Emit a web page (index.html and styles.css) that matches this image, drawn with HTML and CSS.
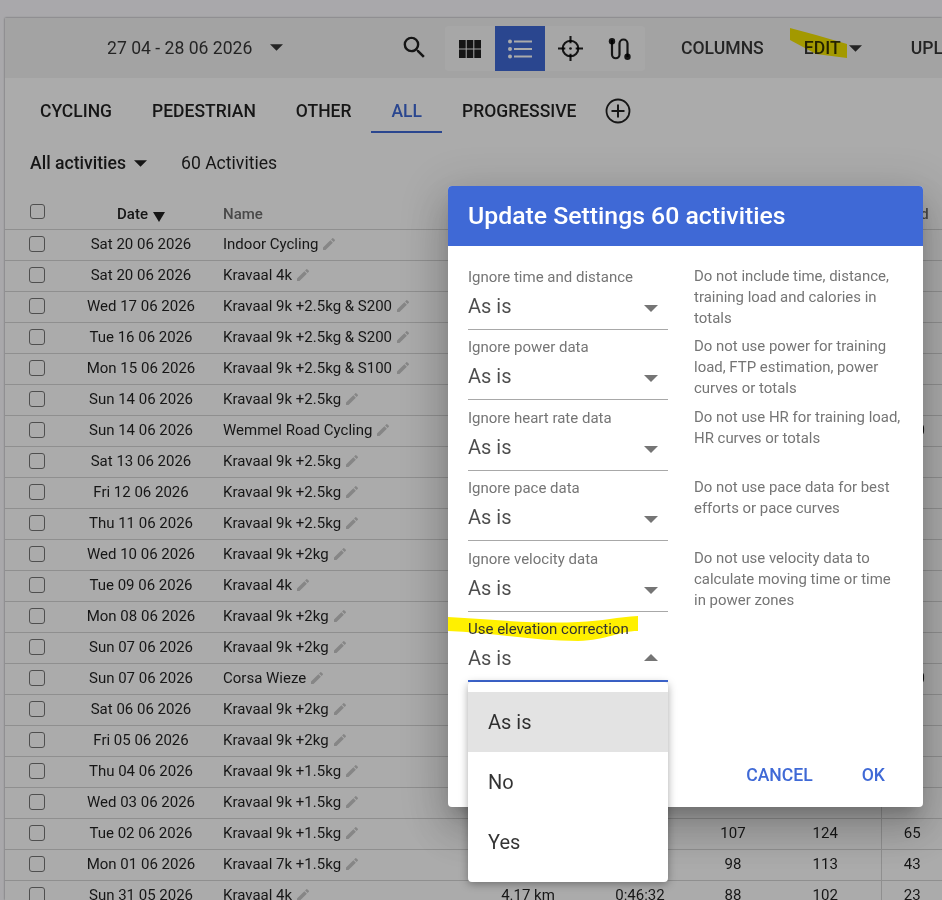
FILE: index.html
```html
<!DOCTYPE html>
<html lang="en">
<head>
<meta charset="utf-8">
<title>Activities</title>
<link rel="stylesheet" href="styles.css">
</head>
<body>
<svg class="defs" width="0" height="0"><symbol id="pen" viewBox="0 0 24 24"><path d="M3 17.250V21h3.750L17.810 9.940l-3.750-3.750L3 17.250zM20.710 7.040a1 1 0 0 0 0-1.410l-2.340-2.340a1 1 0 0 0-1.410 0l-1.830 1.830 3.750 3.750 1.830-1.830z"/></symbol></svg>
<div class="card">
  <header class="toolbar">
    <div class="range">27 04 - 28 06 2026<svg class="caret-lg" viewBox="0 0 12 6"><path d="M0 0h12L6 6z"/></svg></div>
    <svg class="search" viewBox="0 0 24 24"><path d="M15.500 14h-.79l-.28-.27A6.470 6.470 0 0 0 16 9.500 6.500 6.500 0 1 0 9.500 16c1.610 0 3.090-.59 4.230-1.570l.27.28v.79l5 4.990L20.490 19l-4.990-5zm-6 0C7.010 14 5 11.990 5 9.500S7.010 5 9.500 5 14 7.010 14 9.500 11.990 14 9.500 14z"/></svg>
    <div class="views">
      <div class="view"><svg class="ico" viewBox="0 0 24 24"><path d="M1 3h6.700v8.600H1zM8.700 3h6.600v8.600H8.700zM16.300 3H23v8.600h-6.700zM1 12.500h6.700V21H1zM8.700 12.500h6.600V21H8.700zM16.300 12.500H23V21h-6.700z"/></svg></div>
      <div class="view view-on"><svg class="ico" viewBox="0 0 24 24"><circle cx="2" cy="4.500" r="2"/><circle cx="2" cy="12" r="2"/><circle cx="2" cy="19.500" r="2"/><rect x="6" y="3.500" width="18" height="2"/><rect x="6" y="11" width="18" height="2"/><rect x="6" y="18.500" width="18" height="2"/></svg></div>
      <div class="view"><svg class="ico ico-target" viewBox="0 0 24 24"><circle cx="12" cy="12" r="7.500" fill="none" stroke="currentColor" stroke-width="2"/><circle cx="12" cy="12" r="1.300"/><path d="M11 0h2v7h-2zM11 17h2v7h-2zM0 11h7v2H0zM17 11h7v2h-7z"/></svg></div>
      <div class="view"><svg class="ico" viewBox="0 0 24 24"><path d="M4 3v14.500a3.750 3.750 0 0 0 7.500 0V6.500a4 4 0 0 1 8 0V20" fill="none" stroke="currentColor" stroke-width="2.200"/><circle cx="4" cy="4.200" r="3.200"/><circle cx="19.500" cy="19.800" r="3.200"/></svg></div>
    </div>
    <span class="tool-btn tool-columns">COLUMNS</span>
    <span class="tool-btn tool-edit">EDIT<svg class="caret-sm" viewBox="0 0 12 6"><path d="M0 0h12L6 6z"/></svg><svg class="mark mark-edit" viewBox="0 0 57 30"><path d="M0 0L26 7 57 16V30L26 26 0 12z"/></svg></span>
    <span class="tool-btn tool-upload">UPLOAD</span>
  </header>

  <nav class="tabs">
    <span class="tab">CYCLING</span>
    <span class="tab">PEDESTRIAN</span>
    <span class="tab">OTHER</span>
    <span class="tab tab-on">ALL</span>
    <span class="tab">PROGRESSIVE</span>
    <svg class="add" viewBox="0 0 26 26"><circle cx="13" cy="13" r="11.500" fill="none" stroke="currentColor" stroke-width="1.800"/><path d="M12 6.500h2V12h5.500v2H14v5.500h-2V14H6.500v-2H12z"/></svg>
  </nav>

  <div class="filter">
    <span class="filter-name">All activities<svg class="caret-sm" viewBox="0 0 12 6"><path d="M0 0h12L6 6z"/></svg></span>
    <span class="count">60 Activities</span>
  </div>

  <table class="grid">
    <thead>
      <tr>
        <th class="c-check"><span class="box box-head"></span></th>
        <th class="c-date">Date<svg class="sort" viewBox="0 0 12 10"><path d="M0 0h12L6 10z"/></svg></th>
        <th class="c-name">Name</th>
        <th class="c-dist"></th><th class="c-time"></th><th class="c-avg"></th><th class="c-max"></th>
        <th class="c-last">Load</th>
      </tr>
    </thead>
    <tbody>
      <tr><td><span class="box"></span></td><td>Sat 20 06 2026</td><td class="c-name">Indoor Cycling<svg class="pen"><use href="#pen"/></svg></td><td></td><td></td><td></td><td></td><td class="c-last"></td></tr>
      <tr><td><span class="box"></span></td><td>Sat 20 06 2026</td><td class="c-name">Kravaal 4k<svg class="pen"><use href="#pen"/></svg></td><td></td><td></td><td></td><td></td><td class="c-last"></td></tr>
      <tr><td><span class="box"></span></td><td>Wed 17 06 2026</td><td class="c-name">Kravaal 9k +2.5kg &amp; S200<svg class="pen"><use href="#pen"/></svg></td><td></td><td></td><td></td><td></td><td class="c-last"></td></tr>
      <tr><td><span class="box"></span></td><td>Tue 16 06 2026</td><td class="c-name">Kravaal 9k +2.5kg &amp; S200<svg class="pen"><use href="#pen"/></svg></td><td></td><td></td><td></td><td></td><td class="c-last"></td></tr>
      <tr><td><span class="box"></span></td><td>Mon 15 06 2026</td><td class="c-name">Kravaal 9k +2.5kg &amp; S100<svg class="pen"><use href="#pen"/></svg></td><td></td><td></td><td></td><td></td><td class="c-last"></td></tr>
      <tr><td><span class="box"></span></td><td>Sun 14 06 2026</td><td class="c-name">Kravaal 9k +2.5kg<svg class="pen"><use href="#pen"/></svg></td><td></td><td></td><td></td><td></td><td class="c-last"></td></tr>
      <tr><td><span class="box"></span></td><td>Sun 14 06 2026</td><td class="c-name">Wemmel Road Cycling<svg class="pen"><use href="#pen"/></svg></td><td></td><td></td><td></td><td></td><td class="c-last">100</td></tr>
      <tr><td><span class="box"></span></td><td>Sat 13 06 2026</td><td class="c-name">Kravaal 9k +2.5kg<svg class="pen"><use href="#pen"/></svg></td><td></td><td></td><td></td><td></td><td class="c-last"></td></tr>
      <tr><td><span class="box"></span></td><td>Fri 12 06 2026</td><td class="c-name">Kravaal 9k +2.5kg<svg class="pen"><use href="#pen"/></svg></td><td></td><td></td><td></td><td></td><td class="c-last"></td></tr>
      <tr><td><span class="box"></span></td><td>Thu 11 06 2026</td><td class="c-name">Kravaal 9k +2.5kg<svg class="pen"><use href="#pen"/></svg></td><td></td><td></td><td></td><td></td><td class="c-last"></td></tr>
      <tr><td><span class="box"></span></td><td>Wed 10 06 2026</td><td class="c-name">Kravaal 9k +2kg<svg class="pen"><use href="#pen"/></svg></td><td></td><td></td><td></td><td></td><td class="c-last"></td></tr>
      <tr><td><span class="box"></span></td><td>Tue 09 06 2026</td><td class="c-name">Kravaal 4k<svg class="pen"><use href="#pen"/></svg></td><td></td><td></td><td></td><td></td><td class="c-last"></td></tr>
      <tr><td><span class="box"></span></td><td>Mon 08 06 2026</td><td class="c-name">Kravaal 9k +2kg<svg class="pen"><use href="#pen"/></svg></td><td></td><td></td><td></td><td></td><td class="c-last"></td></tr>
      <tr><td><span class="box"></span></td><td>Sun 07 06 2026</td><td class="c-name">Kravaal 9k +2kg<svg class="pen"><use href="#pen"/></svg></td><td></td><td></td><td></td><td></td><td class="c-last"></td></tr>
      <tr><td><span class="box"></span></td><td>Sun 07 06 2026</td><td class="c-name">Corsa Wieze<svg class="pen"><use href="#pen"/></svg></td><td></td><td></td><td></td><td></td><td class="c-last">100</td></tr>
      <tr><td><span class="box"></span></td><td>Sat 06 06 2026</td><td class="c-name">Kravaal 9k +2kg<svg class="pen"><use href="#pen"/></svg></td><td></td><td></td><td></td><td></td><td class="c-last"></td></tr>
      <tr><td><span class="box"></span></td><td>Fri 05 06 2026</td><td class="c-name">Kravaal 9k +2kg<svg class="pen"><use href="#pen"/></svg></td><td></td><td></td><td></td><td></td><td class="c-last"></td></tr>
      <tr><td><span class="box"></span></td><td>Thu 04 06 2026</td><td class="c-name">Kravaal 9k +1.5kg<svg class="pen"><use href="#pen"/></svg></td><td></td><td></td><td></td><td></td><td class="c-last"></td></tr>
      <tr><td><span class="box"></span></td><td>Wed 03 06 2026</td><td class="c-name">Kravaal 9k +1.5kg<svg class="pen"><use href="#pen"/></svg></td><td></td><td></td><td></td><td></td><td class="c-last"></td></tr>
      <tr><td><span class="box"></span></td><td>Tue 02 06 2026</td><td class="c-name">Kravaal 9k +1.5kg<svg class="pen"><use href="#pen"/></svg></td><td></td><td></td><td>107</td><td>124</td><td class="c-last">65</td></tr>
      <tr><td><span class="box"></span></td><td>Mon 01 06 2026</td><td class="c-name">Kravaal 7k +1.5kg<svg class="pen"><use href="#pen"/></svg></td><td></td><td></td><td>98</td><td>113</td><td class="c-last">43</td></tr>
      <tr><td><span class="box"></span></td><td>Sun 31 05 2026</td><td class="c-name">Kravaal 4k<svg class="pen"><use href="#pen"/></svg></td><td>4.17 km</td><td>0:46:32</td><td>88</td><td>102</td><td class="c-last">23</td></tr>
    </tbody>
  </table>
</div>

<div class="scrim"></div>

<section class="dialog">
  <h2 class="dialog-title">Update Settings 60 activities</h2>
  <div class="dialog-body">
    <div class="setting">
      <div class="select"><label class="select-label">Ignore time and distance</label><div class="select-value">As is<svg class="select-caret" viewBox="0 0 14 7"><path d="M0 0h14L7 7z"/></svg></div></div>
      <p class="help">Do not include time, distance, training load and calories in totals</p>
    </div>
    <div class="setting">
      <div class="select"><label class="select-label">Ignore power data</label><div class="select-value">As is<svg class="select-caret" viewBox="0 0 14 7"><path d="M0 0h14L7 7z"/></svg></div></div>
      <p class="help">Do not use power for training load, FTP estimation, power curves or totals</p>
    </div>
    <div class="setting">
      <div class="select"><label class="select-label">Ignore heart rate data</label><div class="select-value">As is<svg class="select-caret" viewBox="0 0 14 7"><path d="M0 0h14L7 7z"/></svg></div></div>
      <p class="help">Do not use HR for training load, HR curves or totals</p>
    </div>
    <div class="setting">
      <div class="select"><label class="select-label">Ignore pace data</label><div class="select-value">As is<svg class="select-caret" viewBox="0 0 14 7"><path d="M0 0h14L7 7z"/></svg></div></div>
      <p class="help">Do not use pace data for best efforts or pace curves</p>
    </div>
    <div class="setting">
      <div class="select"><label class="select-label">Ignore velocity data</label><div class="select-value">As is<svg class="select-caret" viewBox="0 0 14 7"><path d="M0 0h14L7 7z"/></svg></div></div>
      <p class="help">Do not use velocity data to calculate moving time or time in power zones</p>
    </div>
    <div class="setting">
      <div class="select select-open">
        <label class="select-label select-label-marked"><svg class="mark mark-label" viewBox="0 0 190 25" preserveAspectRatio="none"><path d="M0 1C50 4 90 8 130 6 155 5 170 1 190 0V15C170 15 160 24 130 25 85 25 40 16 0 15z"/></svg><span class="on-mark">Use elevation correction</span></label>
        <div class="select-value">As is<svg class="select-caret" viewBox="0 0 14 7"><path d="M0 7h14L7 0z"/></svg></div>
      </div>
    </div>
  </div>
  <footer class="dialog-actions"><span class="action">CANCEL</span><span class="action">OK</span></footer>
</section>

<ul class="menu">
  <li class="menu-item menu-item-on">As is</li>
  <li class="menu-item">No</li>
  <li class="menu-item">Yes</li>
</ul>
</body>
</html>
```
FILE: styles.css
```css
* { box-sizing: border-box; }
html, body { height: 100%; }
body {
  margin: 0;
  height: 900px;
  overflow: hidden;
  background: #fcfbff;
  padding: 18px 0 0 5px;
  font-family: Roboto, "Liberation Sans", sans-serif;
  color: rgba(0, 0, 0, .87);
}
svg { fill: currentColor; display: inline-block; }
.defs { position: absolute; }

.card {
  width: 937px;
  height: 882px;
  overflow: hidden;
  background: #fff;
  box-shadow: 0 0 2px rgba(0, 0, 0, .45);
}

/* toolbar */
.toolbar {
  height: 60px;
  background: #f3f3f3;
  display: flex;
  align-items: center;
  font-size: 17.600px;
  font-weight: 500;
  white-space: nowrap;
}
.range {
  margin-left: 102px;
  width: 293px;
  flex: none;
  font-size: 17.600px;
  font-weight: 400;
  color: rgba(0, 0, 0, .78);
  display: flex;
  align-items: center;
}
.caret-lg { width: 13px; height: 7px; margin-left: 18px; margin-top: -1px; flex: none; }
.caret-sm { width: 13px; height: 7px; margin-left: 8px; flex: none; }
.search { width: 29px; height: 29px; flex: none; margin-top: -1px; }
.views {
  margin-left: 16px;
  flex: none;
  display: flex;
  background: #fafafa;
  border-radius: 4px;
  height: 45px;
  margin-top: 1px;
}
.view { width: 50px; display: flex; align-items: center; justify-content: center; }
.view-on { background: #3f69d6; color: #fff; }
.ico { width: 24px; height: 24px; }
.ico-target { width: 25px; height: 25px; }
.tool-btn { position: relative; color: rgba(0, 0, 0, .78); }
.tool-columns { margin-left: 36px; }
.tool-edit { margin-left: 40px; display: inline-flex; align-items: center; }
.tool-upload { margin-left: 49px; }
.mark { position: absolute; fill: #fff000; mix-blend-mode: multiply; pointer-events: none; }
.mark-edit { left: -14px; top: -10px; width: 57px; height: 30px; }

/* tabs */
.tabs {
  height: 66px;
  display: flex;
  align-items: flex-start;
  padding-left: 15px;
  font-size: 17.500px;
}
.tab {
  height: 55px;
  line-height: 66px;
  padding: 0 20px;
  font-weight: 500;
}
.tab-on { color: #3f69d6; border-bottom: 2px solid #3f69d6; }
.add { width: 26px; height: 26px; margin: 20px 0 0 9px; }

/* filter */
.filter {
  height: 38px;
  display: flex;
  align-items: center;
  padding-left: 25px;
  font-size: 17.600px;
}
.filter-name { font-weight: 500; width: 151px; display: inline-flex; align-items: center; }

/* table */
.grid {
  margin-top: 12px;
  border-collapse: collapse;
  table-layout: fixed;
  width: 938px;
  font-size: 15px;
}
.grid th {
  height: 35px;
  padding: 5px 0 0;
  font-weight: 500;
  text-align: center;
  border-bottom: 1px solid #d6d6d6;
}
.grid td {
  height: 31px;
  padding: 0 0 2px;
  text-align: center;
  border-bottom: 1px solid #d6d6d6;
  white-space: nowrap;
}
.c-check { width: 64px; }
.c-date { width: 144px; }
.grid th.c-name { width: 259px; color: #6e6e6e; }
.grid .c-name { text-align: left; padding-left: 10px; }
.c-dist, .c-time { width: 112px; }
.c-avg { width: 74px; }
.c-max { width: 111px; }
.grid .c-last { width: 62px; border-left: 1px solid #d6d6d6; }
.grid th.c-last { color: #6e6e6e; }
.box {
  display: block;
  width: 16px;
  height: 16px;
  margin: 0 0 0 24px;
  border: 1.500px solid #777;
  border-radius: 3px;
}
.box-head { width: 15px; height: 15px; margin: -5px 0 0 25px; }
.sort { width: 12px; height: 10px; margin: 0 0 -3px 5px; }
.pen { width: 16px; height: 16px; margin-left: 3px; color: #c8c8c8; vertical-align: -3px; }

/* overlay */
.scrim { position: absolute; inset: 0; background: rgba(0, 0, 0, .33); }

/* dialog */
.dialog {
  position: absolute;
  left: 448px;
  top: 186px;
  width: 475px;
  height: 621px;
  background: #fff;
  border-radius: 4px;
  box-shadow: 0 11px 15px -7px rgba(0, 0, 0, .2), 0 24px 38px 3px rgba(0, 0, 0, .14), 0 9px 46px 8px rgba(0, 0, 0, .12);
  display: flex;
  flex-direction: column;
  overflow: hidden;
}
.dialog-title {
  margin: 0;
  height: 60px;
  flex: none;
  background: #3f69d6;
  color: #fff;
  font-size: 24.800px;
  font-weight: 500;
  line-height: 60px;
  padding-left: 20px;
}
.dialog-body { padding: 20px 20px 0; display: flex; flex-direction: column; }
.setting { display: flex; height: 70.400px; }
.select { width: 200px; flex: none; height: 64px; border-bottom: 1px solid #a8a8a8; }
.select-label { display: block; font-size: 15px; line-height: 16px; height: 16px; margin-top: 3px; color: #757575; position: relative; }
.select-value {
  display: flex;
  justify-content: space-between;
  align-items: center;
  font-size: 20px;
  line-height: 30px;
  margin-top: 6px;
  color: rgba(0, 0, 0, .7);
  padding-right: 10px;
}
.select-caret { width: 14px; height: 7px; fill: #757575; margin-top: 5px; }
.select-open { border-bottom: 2px solid #3f69d6; }
.select-open .select-caret { margin-top: 0; }
.select-label-marked { color: #333; }
.mark-label { left: -20px; top: -5px; width: 190px; height: 25px; mix-blend-mode: normal; }
.on-mark { position: relative; }
.help { margin: 0; padding-left: 26px; font-size: 14.950px; line-height: 21px; color: #757575; }
.dialog-actions {
  margin-top: auto;
  height: 64px;
  flex: none;
  display: flex;
  justify-content: flex-end;
  align-items: center;
  gap: 49px;
  padding-right: 38px;
  color: #3f69d6;
  font-size: 17.600px;
  font-weight: 500;
}

/* menu */
.menu {
  position: absolute;
  left: 468px;
  top: 682px;
  width: 200px;
  height: 200px;
  margin: 0;
  padding: 10px 0 0;
  list-style: none;
  background: #fff;
  border-radius: 4px;
  box-shadow: 0 2px 8px rgba(0, 0, 0, .35);
  font-size: 20px;
  color: rgba(0, 0, 0, .8);
}
.menu-item { height: 60px; line-height: 60px; padding-left: 20px; }
.menu-item-on { background: #e3e3e3; }
```
